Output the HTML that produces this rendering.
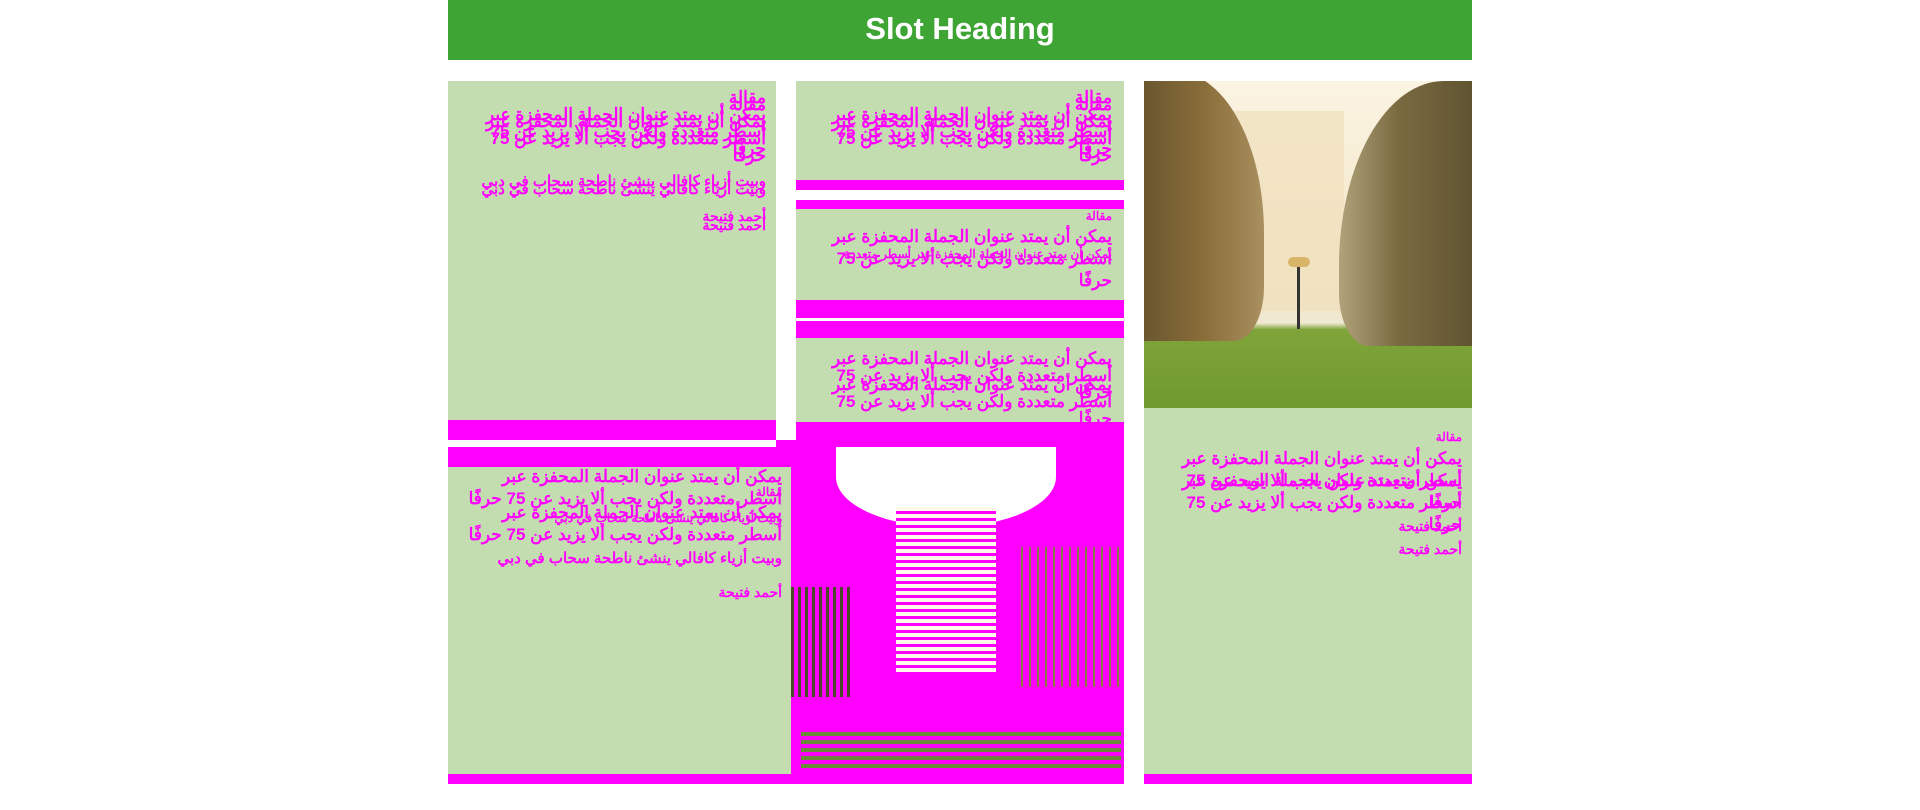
<!DOCTYPE html>
<html><head><meta charset="utf-8"><style>
*{margin:0;padding:0;box-sizing:border-box}
body{width:1920px;height:810px;background:#fff;position:relative;overflow:hidden;font-family:"Liberation Sans","Noto Sans CJK SC",sans-serif}
.a{position:absolute}
.g{background:#c4ddb0}
.m{background:#ff00ff}
.t{position:absolute;direction:rtl;text-align:right;color:#ff00ff;font-weight:bold;font-size:17px;line-height:17px}
.s{font-size:12px}
</style></head><body>
<div class="a" style="left:448px;top:0;width:1024px;height:60px;background:#3ea535;color:#fff;font-size:31px;font-weight:bold;text-align:center;line-height:58px">Slot Heading</div>

<div class="a g" style="left:448px;top:81px;width:328px;height:339px"></div>
<div class="a m" style="left:448px;top:420px;width:328px;height:20px"></div>
<div class="a m" style="left:776px;top:440px;width:20px;height:7px"></div>
<div class="t" style="right:1154px;top:89px;width:290px">مقالة<br>يمكن أن يمتد عنوان الجملة المحفزة عبر أسطر متعددة ولكن يجب ألا يزيد عن 75 حرفًا</div>
<div class="t" style="right:1154px;top:96px;width:290px">مقالة<br>يمكن أن يمتد عنوان الجملة المحفزة عبر أسطر متعددة ولكن يجب ألا يزيد عن 75 حرفًا</div>
<div class="t" style="right:1154px;top:173px;white-space:nowrap;font-size:15px">وبيت أزياء كافالي ينشئ ناطحة سحاب في دبي</div>
<div class="t" style="right:1154px;top:181px;white-space:nowrap;font-size:15px">وبيت أزياء كافالي ينشئ ناطحة سحاب في دبي</div>
<div class="t" style="right:1154px;top:208px;font-size:14px">أحمد فتيحة</div>
<div class="t" style="right:1154px;top:217px;font-size:14px">أحمد فتيحة</div>

<div class="a g" style="left:796px;top:81px;width:328px;height:99px"></div>
<div class="a m" style="left:796px;top:180px;width:328px;height:10px"></div>
<div class="t" style="right:808px;top:89px;width:290px">مقالة<br>يمكن أن يمتد عنوان الجملة المحفزة عبر أسطر متعددة ولكن يجب ألا يزيد عن 75 حرفًا</div>
<div class="t" style="right:808px;top:96px;width:290px">مقالة<br>يمكن أن يمتد عنوان الجملة المحفزة عبر أسطر متعددة ولكن يجب ألا يزيد عن 75 حرفًا</div>

<div class="a m" style="left:796px;top:200px;width:328px;height:9px"></div>
<div class="a g" style="left:796px;top:209px;width:328px;height:91px"></div>
<div class="a m" style="left:796px;top:300px;width:328px;height:18px"></div>
<div class="t s" style="right:808px;top:208px">مقالة</div>
<div class="t" style="right:808px;top:226px;width:290px;line-height:22px">يمكن أن يمتد عنوان الجملة المحفزة عبر أسطر متعددة ولكن يجب ألا يزيد عن 75 حرفًا</div>
<div class="t s" style="right:808px;top:246px;width:290px">يمكن أن يمتد عنوان الجملة المحفزة عبر أسطر متعددة</div>

<div class="a m" style="left:796px;top:321px;width:328px;height:17px"></div>
<div class="a g" style="left:796px;top:338px;width:328px;height:84px"></div>
<div class="a m" style="left:796px;top:422px;width:328px;height:25px"></div>
<div class="t" style="right:808px;top:350px;width:290px">يمكن أن يمتد عنوان الجملة المحفزة عبر أسطر متعددة ولكن يجب ألا يزيد عن 75 حرفًا</div>
<div class="t" style="right:808px;top:376px;width:290px">يمكن أن يمتد عنوان الجملة المحفزة عبر أسطر متعددة ولكن يجب ألا يزيد عن 75 حرفًا</div>

<div class="a m" style="left:448px;top:447px;width:343px;height:20px"></div>
<div class="a g" style="left:448px;top:467px;width:343px;height:307px"></div>
<div class="t" style="right:1138px;top:466px;width:315px;line-height:22px">يمكن أن يمتد عنوان الجملة المحفزة عبر أسطر متعددة ولكن يجب ألا يزيد عن 75 حرفًا</div>
<div class="t" style="right:1138px;top:502px;width:315px;line-height:22px">يمكن أن يمتد عنوان الجملة المحفزة عبر أسطر متعددة ولكن يجب ألا يزيد عن 75 حرفًا</div>
<div class="t s" style="right:1138px;top:484px">مقالة</div>
<div class="t s" style="right:1138px;top:510px;width:320px">وبيت أزياء كافالي ينشئ ناطحة سحاب في دبي</div>
<div class="t" style="right:1138px;top:550px;width:320px;font-size:15px">وبيت أزياء كافالي ينشئ ناطحة سحاب في دبي</div>
<div class="t" style="right:1138px;top:584px;font-size:14px">أحمد فتيحة</div>

<div class="a" style="left:791px;top:447px;width:333px;height:327px;background:#ff00ff;overflow:hidden">
 <div class="a" style="left:45px;top:-20px;width:220px;height:100px;background:#fff;border-radius:0 0 50% 50%"></div>
 <div class="a" style="left:105px;top:60px;width:100px;height:165px;background:repeating-linear-gradient(#fffbe8 0 4px,#ff00ff 4px 7px)"></div>
 <div class="a" style="left:0;top:140px;width:60px;height:110px;background:repeating-linear-gradient(90deg,#4a4a2a 0 3px,#ff00ff 3px 7px)"></div>
 <div class="a" style="left:230px;top:100px;width:100px;height:140px;background:repeating-linear-gradient(90deg,#8a7a4a 0 2px,#ff00ff 2px 8px)"></div>
 <div class="a" style="left:10px;top:285px;width:320px;height:40px;background:repeating-linear-gradient(#6a8a3a 0 4px,#ff00ff 4px 8px)"></div>
</div>
<div class="a m" style="left:448px;top:774px;width:676px;height:10px"></div>

<div class="a" style="left:1144px;top:81px;width:328px;height:327px;overflow:hidden;background:linear-gradient(#fbf4e2 0,#f3e6c8 60%,#f0e8d0 74%,#7fa43a 76%,#6f9a2e 100%)">
 <div class="a" style="left:90px;top:30px;width:110px;height:200px;background:#efe0bc;opacity:.7"></div>
 <div class="a" style="left:-30px;top:-10px;width:150px;height:270px;background:linear-gradient(90deg,#5a4a2a,#8a6e3a 60%,#a99060);border-radius:0 60% 20% 0"></div>
 <div class="a" style="left:195px;top:0;width:150px;height:265px;background:linear-gradient(90deg,#b0a27a,#7a6a40 40%,#5a4f2e);border-radius:70% 0 0 20%"></div>
 <div class="a" style="left:153px;top:180px;width:3px;height:68px;background:#333"></div>
 <div class="a" style="left:144px;top:176px;width:22px;height:10px;border-radius:5px;background:#d9b56a"></div>
</div>
<div class="a g" style="left:1144px;top:408px;width:328px;height:366px"></div>
<div class="a m" style="left:1144px;top:774px;width:328px;height:10px"></div>
<div class="t s" style="right:458px;top:429px">مقالة</div>
<div class="t" style="right:458px;top:448px;width:290px;line-height:22px">يمكن أن يمتد عنوان الجملة المحفزة عبر أسطر متعددة ولكن يجب ألا يزيد عن 75 حرفًا</div>
<div class="t" style="right:458px;top:470px;width:290px;line-height:22px">يمكن أن يمتد عنوان الجملة المحفزة عبر أسطر متعددة ولكن يجب ألا يزيد عن 75 حرفًا</div>
<div class="t" style="right:458px;top:518px;font-size:14px">أحمد فتيحة</div>
<div class="t" style="right:458px;top:541px;font-size:14px">أحمد فتيحة</div>
</body></html>
